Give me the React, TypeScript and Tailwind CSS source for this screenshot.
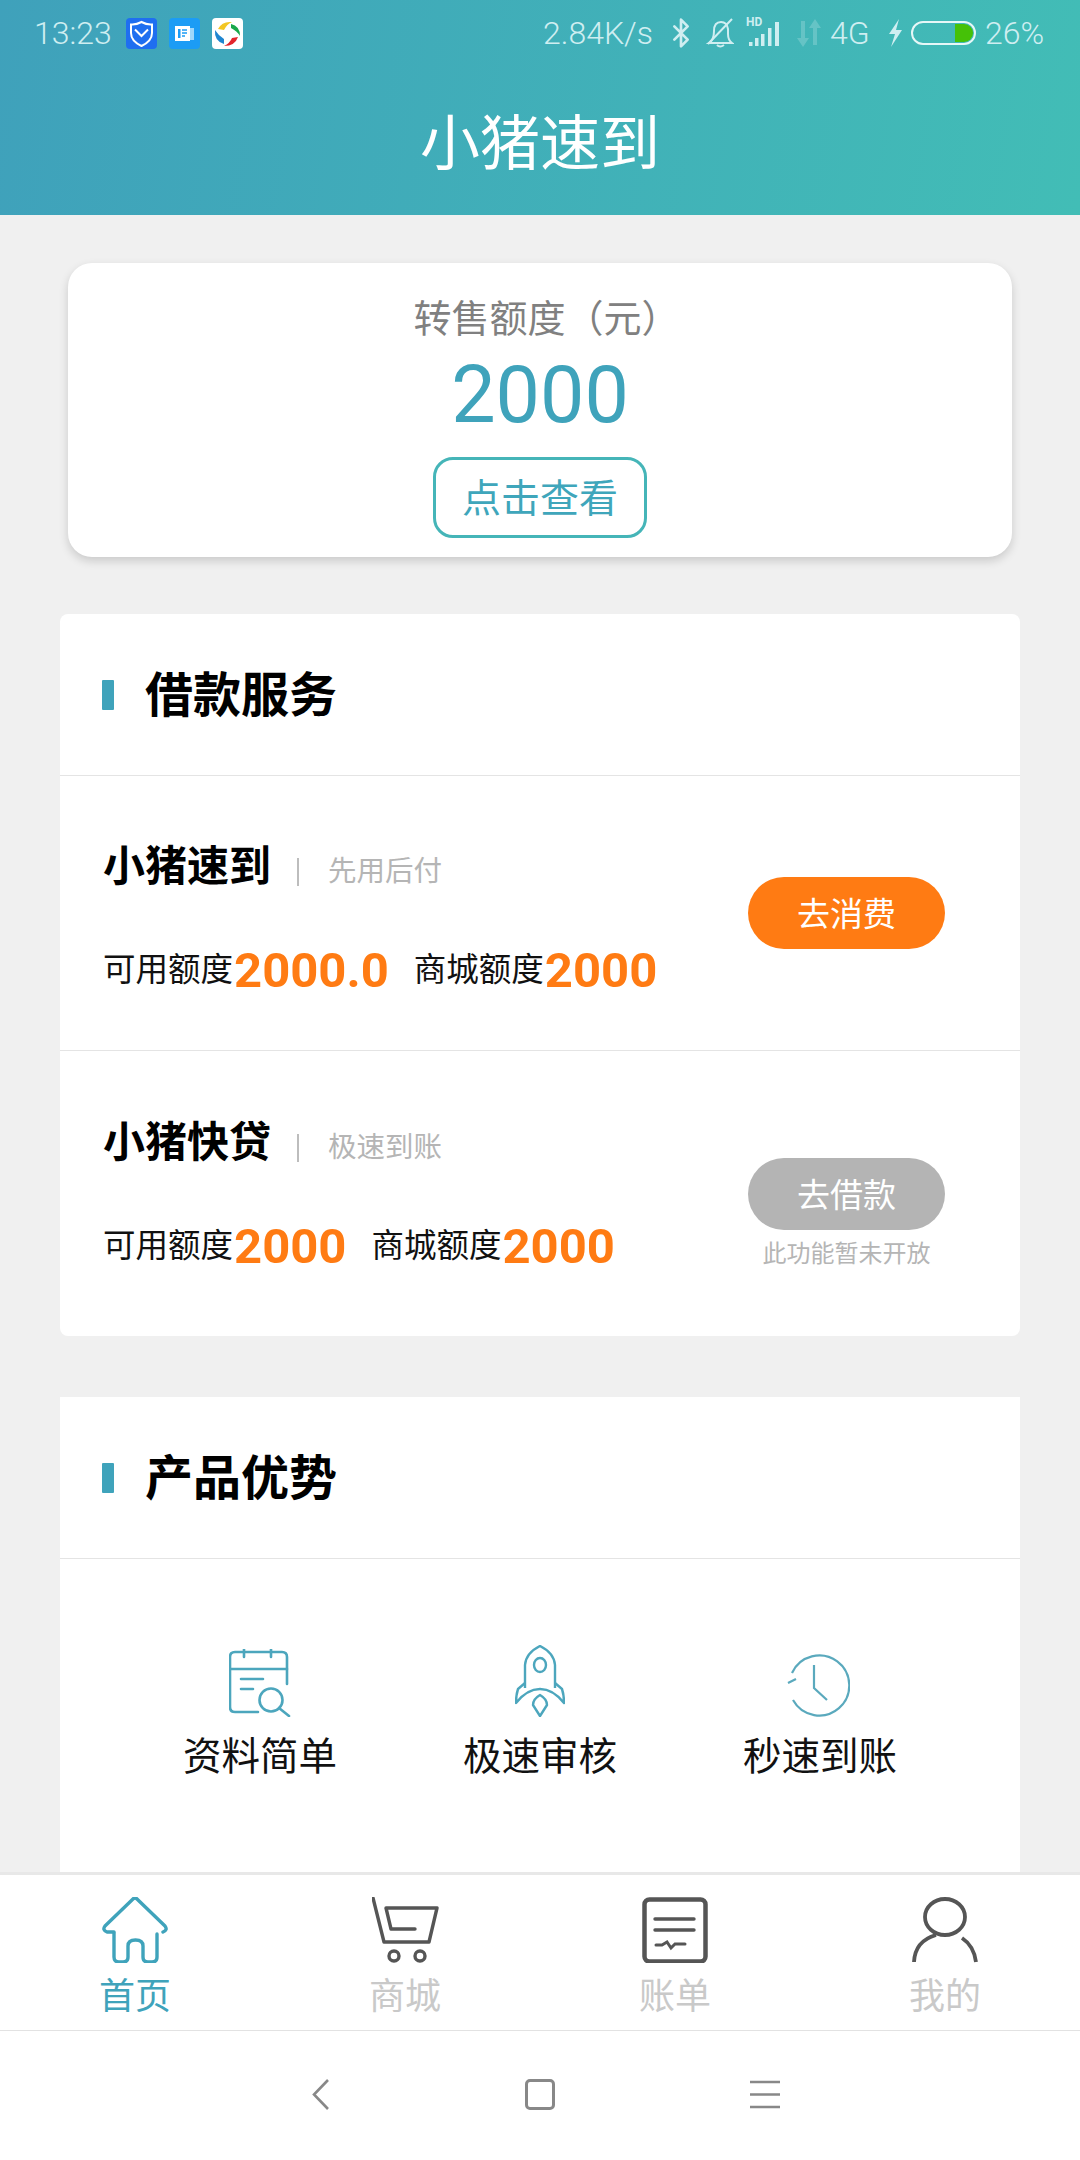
import { Bluetooth } from "lucide-react";
import type { ReactNode } from "react";

type Credit = { label: string; value: string };
type Loan = {
  name: string;
  tag: string;
  credits: Credit[];
  action: string;
  enabled: boolean;
  note?: string;
};

const loans: Loan[] = [
  {
    name: "小猪速到",
    tag: "先用后付",
    credits: [
      { label: "可用额度", value: "2000.0" },
      { label: "商城额度", value: "2000" },
    ],
    action: "去消费",
    enabled: true,
  },
  {
    name: "小猪快贷",
    tag: "极速到账",
    credits: [
      { label: "可用额度", value: "2000" },
      { label: "商城额度", value: "2000" },
    ],
    action: "去借款",
    enabled: false,
    note: "此功能暂未开放",
  },
];

function ShieldApp() {
  return (
    <svg width="31" height="31" viewBox="0 0 31 31">
      <rect width="31" height="31" rx="4" fill="#1f6ff0" />
      <path d="M15.5 4 Q21 7 26 6.5 V15 Q26 23 15.5 28 Q5 23 5 15 V6.5 Q10 7 15.5 4Z" fill="none" stroke="#fff" strokeWidth="2" />
      <path d="M9 11.5 L15.5 18 L22 11.5" fill="none" stroke="#fff" strokeWidth="2" />
    </svg>
  );
}

function NoteApp() {
  return (
    <svg width="31" height="31" viewBox="0 0 31 31">
      <rect width="31" height="31" rx="4" fill="#1c9cf5" />
      <rect x="6" y="8" width="15" height="15" fill="#fff" />
      <rect x="21" y="10" width="4" height="12" fill="#9fd6fb" />
      <rect x="9" y="11" width="2.5" height="9" fill="#1c9cf5" />
      <path d="M13 12h5M13 15h5M13 18h3" stroke="#1c9cf5" strokeWidth="1.5" />
    </svg>
  );
}

function PetalApp() {
  return (
    <svg width="31" height="31" viewBox="0 0 31 31">
      <rect width="31" height="31" rx="4" fill="#fff" />
      <path d="M6 11 Q10 3 20 4 Q15 6 12 12Z" fill="#f3c623" />
      <path d="M19 6 Q28 8 28 18 Q25 13 19 10Z" fill="#18a84a" />
      <path d="M26 19 Q23 28 12 28 Q18 25 20 20Z" fill="#e3242b" />
      <path d="M12 26 Q2 23 3 12 Q6 17 12 21Z" fill="#1f86d0" />
    </svg>
  );
}

function StatusBar() {
  return (
    <div className="flex h-[62px] items-center pt-[4px] text-[32px] text-[#cfeef1]">
      <span className="ml-[34px] w-[77px] font-light">13:23</span>
      <div className="ml-[15px] flex gap-[12px]">
        <ShieldApp />
        <NoteApp />
        <PetalApp />
      </div>
      <span className="ml-[300px] w-[111px] font-light whitespace-nowrap">2.84K/s</span>
      <Bluetooth className="ml-[11px]" size={32} strokeWidth={2} />
      <svg className="ml-[9px]" width="28" height="32" viewBox="0 0 28 32" fill="none" stroke="currentColor" strokeWidth="2">
        <path d="M3 26 Q8 23 8 14 Q8 5 15 5 Q21 5 22 12 V17 Q22 23 26 26 Z" />
        <path d="M2 27 L26 2" />
        <path d="M11 28 Q14 31 18 28" />
      </svg>
      <div className="relative ml-[12px] h-[28px] w-[36px]">
        <span className="absolute top-[-3px] left-0 text-[12px] leading-[12px] font-bold">HD</span>
        <svg className="absolute inset-0" width="36" height="28" viewBox="0 0 36 28" fill="currentColor">
          <rect x="3" y="23" width="3.5" height="4" />
          <rect x="9" y="19" width="3.5" height="8" />
          <rect x="15" y="15" width="3.5" height="12" />
          <rect x="22" y="9" width="3.5" height="18" />
          <rect x="29" y="3" width="4" height="24" />
        </svg>
      </div>
      <svg className="ml-[14px] opacity-25" width="26" height="28" viewBox="0 0 26 28" fill="currentColor">
        <path d="M7 28 L1 19 H5 V2 H9 V19 H13Z" />
        <path d="M19 0 L25 9 H21 V26 H17 V9 H13Z" />
      </svg>
      <span className="ml-[8px] w-[41px] font-light">4G</span>
      <svg className="ml-[17px]" width="15" height="28" viewBox="0 0 15 28" fill="currentColor">
        <path d="M11 0 L1 15 H7 L3 28 L14 11 H8Z" />
      </svg>
      <div className="ml-[8px] flex h-[24px] w-[65px] justify-end rounded-full border-2 border-[#e6f7f7] p-[1px]">
        <div className="h-full w-[18px] rounded-r-full bg-[#45c107]" />
      </div>
      <span className="ml-[9px] font-light">26%</span>
    </div>
  );
}

function SectionTitle({ children }: { children: ReactNode }) {
  return (
    <div className="flex h-[162px] items-center border-b border-[#e4e4e4] pl-[42px]">
      <div className="h-[30px] w-[12px] rounded-[1px] bg-[#3fa3bb]" />
      <h2 className="mt-[2px] ml-[31px] text-[48px] leading-none font-bold text-black">{children}</h2>
    </div>
  );
}

function LoanRow({ loan, last }: { loan: Loan; last: boolean }) {
  return (
    <div className={`flex items-start pl-[43px] ${last ? "h-[285px] pt-[67px]" : "h-[275px] border-b border-[#e4e4e4] pt-[66px]"}`}>
      <div className="flex-1">
        <div className="flex h-[50px] items-center">
          <span className="text-[42px] leading-none font-bold text-black">{loan.name}</span>
          <span className="mt-[10px] ml-[26px] h-[28px] w-[2px] bg-[#bdbdbd]" />
          <span className="mt-[10px] ml-[29px] text-[28.5px] leading-none text-[#b5b5b5]">{loan.tag}</span>
        </div>
        <div className="mt-[53px] flex h-[50px] items-center gap-[25px]">
          {loan.credits.map((c) => (
            <div key={c.label} className="flex items-center">
              <span className="text-[32.5px] leading-none text-[#111]">{c.label}</span>
              <span className="ml-[1px] text-[49px] leading-none font-bold text-[#ff7b13]">{c.value}</span>
            </div>
          ))}
        </div>
      </div>
      <div className={`mr-[75px] flex w-[197px] flex-col items-center ${loan.enabled ? "mt-[35px]" : "mt-[40px]"}`}>
        <div className={`flex h-[72px] w-[197px] items-center justify-center rounded-full pt-[3px] text-[33px] text-white ${loan.enabled ? "bg-[#ff7b13]" : "bg-[#b4b4b4]"}`}>
          {loan.action}
        </div>
        {loan.note && <div className="mt-[10px] text-[24px] leading-[28px] text-[#b5b5b5]">{loan.note}</div>}
      </div>
    </div>
  );
}

function DocSearchIcon() {
  return (
    <svg width="62" height="68" viewBox="0 0 62 68" fill="none" stroke="#4ca6bd" strokeWidth="2.6" strokeLinecap="round">
      <path d="M58 35 V8 Q58 3 53 3 H6 Q1 3 1 8 V58 Q1 63 6 63 H29" />
      <path d="M1 20 H58 M15 0 V8 M42 0 V8 M12 30 H34 M12 40 H24" />
      <circle cx="42" cy="51" r="11.5" />
      <path d="M50 59 L60 67" />
    </svg>
  );
}

function RocketIcon() {
  return (
    <svg width="50" height="72" viewBox="0 0 50 72" fill="none" stroke="#4ca6bd" strokeWidth="2.4" strokeLinejoin="round">
      <path d="M10 43 V20 Q11 8 25 1 Q39 8 40 20 V43" />
      <ellipse cx="25" cy="20" rx="6" ry="7" />
      <path d="M10 38 L3 44 Q1 50 1 58 Q12 44 25 44 Q38 44 49 58 Q49 50 47 44 L40 38" />
      <path d="M25 50 Q32 54 32 60 L25 71 L18 60 Q18 54 25 50Z" />
    </svg>
  );
}

function ClockIcon() {
  return (
    <svg className="mr-[3px]" width="63" height="63" viewBox="0 0 63 63" fill="none" stroke="#5aa9bd" strokeWidth="2.2">
      <path d="M5 19 A30 30 0 1 1 6 46" />
      <path d="M1 29 L9 25 M27 11 V34 L40 46" />
    </svg>
  );
}

const perks = [
  { label: "资料简单", icon: <DocSearchIcon /> },
  { label: "极速审核", icon: <RocketIcon /> },
  { label: "秒速到账", icon: <ClockIcon /> },
];

function HomeIcon() {
  return (
    <svg width="66" height="66" viewBox="0 0 66 66" fill="none" stroke="#3fa3bb" strokeWidth="3.4" strokeLinecap="round" strokeLinejoin="round">
      <path d="M12 35 H5 Q0 33 3 29 L31 2 Q33 0 35 2 L63 29 Q66 33 61 35" />
      <path d="M55 37 V60 Q55 65 50 65 H46 Q41 65 41 60 V49 Q41 43 33.5 43 Q26 43 26 49 V60 Q26 65 21 65 H17 Q12 65 12 60 V36" />
    </svg>
  );
}

function CartIcon() {
  return (
    <svg width="67" height="66" viewBox="0 0 67 66" fill="none" stroke="#555" strokeWidth="3.4" strokeLinecap="round" strokeLinejoin="round">
      <path d="M1 1 L12 45 H57 L65 11 H14 L19 32 H43" />
      <circle cx="22" cy="59" r="5" />
      <circle cx="48" cy="59" r="5" />
    </svg>
  );
}

function BillIcon() {
  return (
    <svg width="66" height="66" viewBox="0 0 66 66" fill="none" stroke="#555" strokeLinecap="round">
      <rect x="2.5" y="2.5" width="61" height="62" rx="5" strokeWidth="4.5" />
      <path d="M13 22 H52 M13 33 H52" strokeWidth="3.4" />
      <path d="M14 48 H20 L25 45 L29 51 L33 47 H43" strokeWidth="3" />
    </svg>
  );
}

function UserIcon() {
  return (
    <svg width="66" height="66" viewBox="0 0 66 66" fill="none" stroke="#555" strokeWidth="3.8">
      <ellipse cx="33" cy="20" rx="20" ry="18" />
      <path d="M2 65 Q3 44 24 38" />
      <path d="M50 41 Q62 49 64 65" />
    </svg>
  );
}

const tabs = [
  { label: "首页", icon: <HomeIcon />, active: true },
  { label: "商城", icon: <CartIcon />, active: false },
  { label: "账单", icon: <BillIcon />, active: false },
  { label: "我的", icon: <UserIcon />, active: false },
];

export default function App() {
  return (
    <div className="flex h-[2160px] w-[1080px] flex-col overflow-hidden bg-[#f0f0f0] font-['Roboto','Noto_Sans_CJK_SC',sans-serif]">
      <header className="h-[215px] shrink-0 bg-[linear-gradient(100deg,#3fa1bb,#42bdb6)]">
        <StatusBar />
        <h1 className="mt-[44px] text-center text-[60px] leading-[78px] font-normal text-white">小猪速到</h1>
      </header>

      <main className="min-h-0 flex-1 overflow-hidden">
        <section className="mx-[68px] mt-[48px] flex h-[294px] flex-col items-center rounded-[24px] bg-white pt-[31px] shadow-[0_4px_10px_rgba(0,0,0,0.16)]">
          <div className="pl-[13px] text-[38px] leading-[50px] text-[#808080]">转售额度（元）</div>
          <div className="mt-[9px] text-[79px] leading-[84px] font-normal text-[#3fa3bb]">2000</div>
          <div className="mt-[20px] flex h-[81px] w-[214px] items-center justify-center rounded-[20px] border-[3px] border-[#45b5b8] pt-[4px] text-[39px] text-[#3fa6bb]">
            点击查看
          </div>
        </section>

        <section className="mx-[60px] mt-[57px] rounded-[8px] bg-white">
          <SectionTitle>借款服务</SectionTitle>
          {loans.map((loan, i) => (
            <LoanRow key={loan.name} loan={loan} last={i === loans.length - 1} />
          ))}
        </section>

        <section className="mx-[60px] mt-[61px] bg-white pb-[120px]">
          <SectionTitle>产品优势</SectionTitle>
          <div className="grid grid-cols-3 px-[60px] pt-[86px]">
            {perks.map((p) => (
              <div key={p.label} className="flex flex-col items-center">
                <div className="flex h-[72px] items-end">{p.icon}</div>
                <div className="mt-[15px] text-[38.5px] leading-[50px] text-[#111]">{p.label}</div>
              </div>
            ))}
          </div>
        </section>
      </main>

      <nav className="grid h-[159px] shrink-0 grid-cols-4 border-t-[3px] border-b-[1px] border-t-[#e8e8e8] border-b-[#e2e2e2] bg-white pt-[22px]">
        {tabs.map((t) => (
          <div key={t.label} className="flex flex-col items-center">
            {t.icon}
            <span className={`mt-[11px] text-[36px] leading-[46px] ${t.active ? "text-[#3fa3bb]" : "text-[#c9c9c9]"}`}>{t.label}</span>
          </div>
        ))}
      </nav>

      <div className="flex h-[129px] shrink-0 items-start bg-white pt-[48px] pl-[312px]">
        <svg width="17" height="31" viewBox="0 0 17 31" fill="none" stroke="#888" strokeWidth="2.6">
          <path d="M16 1 L2 15.5 L16 30" />
        </svg>
        <div className="ml-[196px] h-[31px] w-[30px] rounded-[5px] border-[3px] border-[#888]" />
        <svg className="ml-[195px]" width="30" height="31" viewBox="0 0 30 31" stroke="#888" strokeWidth="2.6">
          <path d="M0 3 H30 M0 15.5 H30 M0 28 H30" />
        </svg>
      </div>
    </div>
  );
}
